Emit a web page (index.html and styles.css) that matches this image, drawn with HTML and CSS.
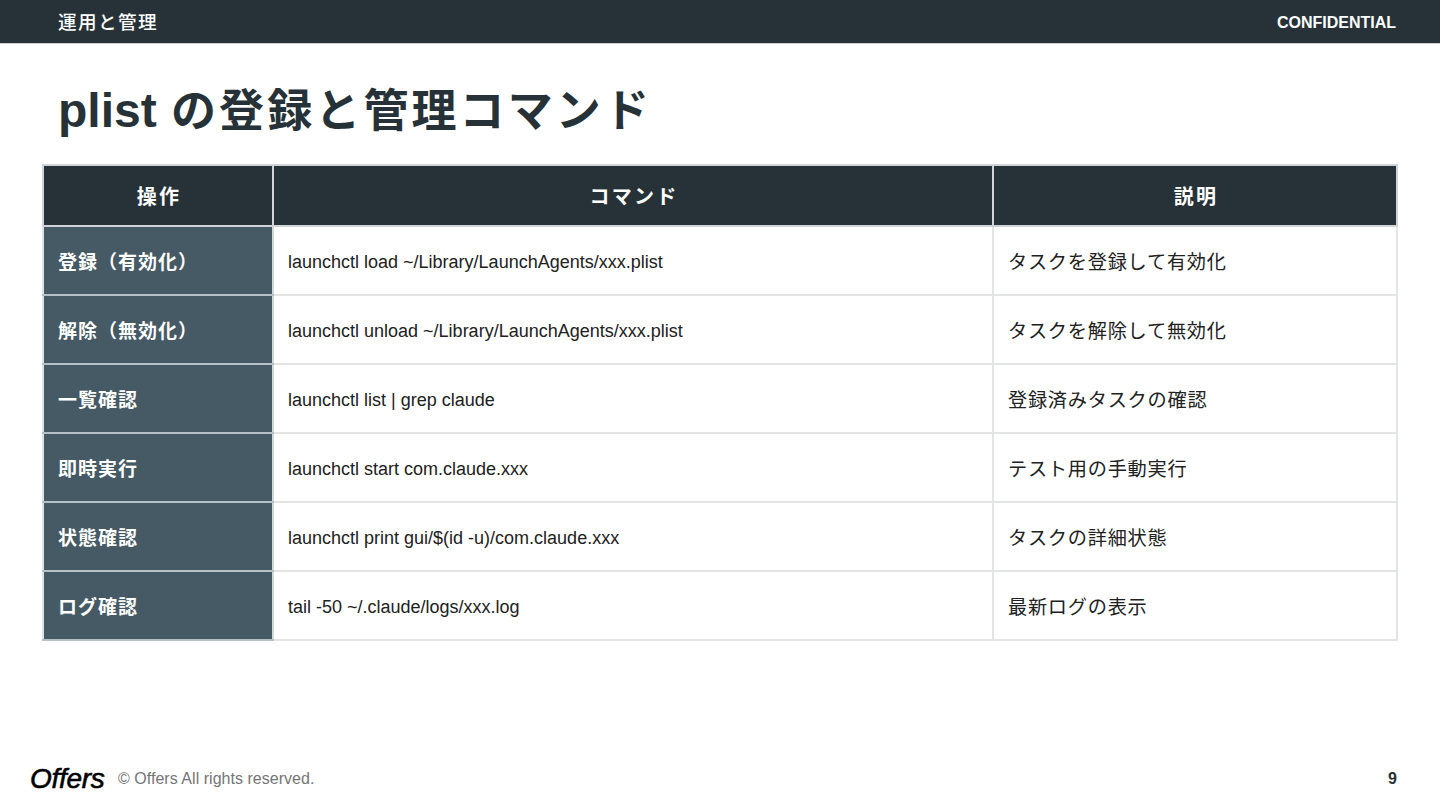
FILE: index.html
```html
<!DOCTYPE html>
<html lang="ja">
<head>
<meta charset="utf-8">
<title>plist の登録と管理コマンド</title>
<link rel="stylesheet" href="styles.css">
</head>
<body>
<div class="slide">
  <header class="topbar">
    <span class="section">運用と管理</span>
    <span class="conf">CONFIDENTIAL</span>
  </header>
  <h1 class="title">plist <span class="title-ja">の登録と管理コマンド</span></h1>
  <table class="cmds">
    <colgroup><col class="c1"><col class="c2"><col class="c3"></colgroup>
    <thead>
      <tr><th>操作</th><th>コマンド</th><th>説明</th></tr>
    </thead>
    <tbody>
      <tr><td class="op">登録（有効化）</td><td class="cmd">launchctl load ~/Library/LaunchAgents/xxx.plist</td><td class="desc">タスクを登録して有効化</td></tr>
      <tr><td class="op">解除（無効化）</td><td class="cmd">launchctl unload ~/Library/LaunchAgents/xxx.plist</td><td class="desc">タスクを解除して無効化</td></tr>
      <tr><td class="op">一覧確認</td><td class="cmd">launchctl list | grep claude</td><td class="desc">登録済みタスクの確認</td></tr>
      <tr><td class="op">即時実行</td><td class="cmd">launchctl start com.claude.xxx</td><td class="desc">テスト用の手動実行</td></tr>
      <tr><td class="op">状態確認</td><td class="cmd">launchctl print gui/$(id -u)/com.claude.xxx</td><td class="desc">タスクの詳細状態</td></tr>
      <tr><td class="op">ログ確認</td><td class="cmd">tail -50 ~/.claude/logs/xxx.log</td><td class="desc">最新ログの表示</td></tr>
    </tbody>
  </table>
  <footer class="foot">
    <span class="logo">Offers</span>
    <span class="copy">© Offers All rights reserved.</span>
    <span class="page">9</span>
  </footer>
</div>
</body>
</html>
```
FILE: styles.css
```css
* { box-sizing: border-box; }
html, body { margin: 0; padding: 0; background: #fff; }
body { font-family: "Liberation Sans", "Noto Sans CJK JP", sans-serif; }
.slide { width: 1440px; height: 810px; display: flex; flex-direction: column; overflow: hidden; background: #fff; }
.topbar { height: 44px; flex: none; background: #263238; border-bottom: 1px solid #c9cccd; color: #fff; display: flex; align-items: center; justify-content: space-between; padding: 1px 44px 0 58px; }
.section { font-size: 18.6px; letter-spacing: 1.4px; font-weight: 500; line-height: 20px; margin-top: 1px; }
.conf { font-size: 16px; font-weight: 700; margin-top: 1px; }
.title { margin: 0; height: 120px; flex: none; padding: 37px 0 0 58px; font-size: 48px; line-height: 60px; font-weight: 700; color: #263238; }
.title-ja { font-size: 45px; letter-spacing: 3.1px; margin-left: 1px; }
.cmds { margin-left: 42px; width: 1354px; flex: none; border-collapse: collapse; table-layout: fixed; }
.c1 { width: 230px; } .c2 { width: 720px; } .c3 { width: 404px; }
.cmds th, .cmds td { border: 2px solid #e2e4e5; padding: 0 14px; }
.cmds thead tr { height: 61px; }
.cmds tbody tr { height: 69px; }
.cmds th { background: #263238; color: #fff; font-size: 20px; letter-spacing: 2.2px; font-weight: 700; text-align: center; padding-left: 16px; border-color: #d0d4d6; }
.cmds .op { background: #455a64; color: #fff; font-size: 19px; letter-spacing: 1px; font-weight: 700; border-color: #b4c1c7; border-left-color: #dfe2e3; border-right-color: #d3d8da; }
.cmds .cmd { font-size: 18px; color: #212121; padding-top: 4px; }
.desc { font-size: 19.2px; letter-spacing: .75px; color: #212121; }
.foot { flex: 1; display: flex; align-items: center; padding: 6px 43px 0 30px; margin-top: 101px; font-size: 16px; }
.logo { flex: none; margin-right: 13px; width: 75px; font-style: italic; font-size: 28px; line-height: 32px; letter-spacing: -.3px; color: #000; -webkit-text-stroke: .6px #000; }
.copy { color: #757575; letter-spacing: .03px; }
.page { margin-left: auto; color: #263238; font-size: 16px; font-weight: 700; }
```
